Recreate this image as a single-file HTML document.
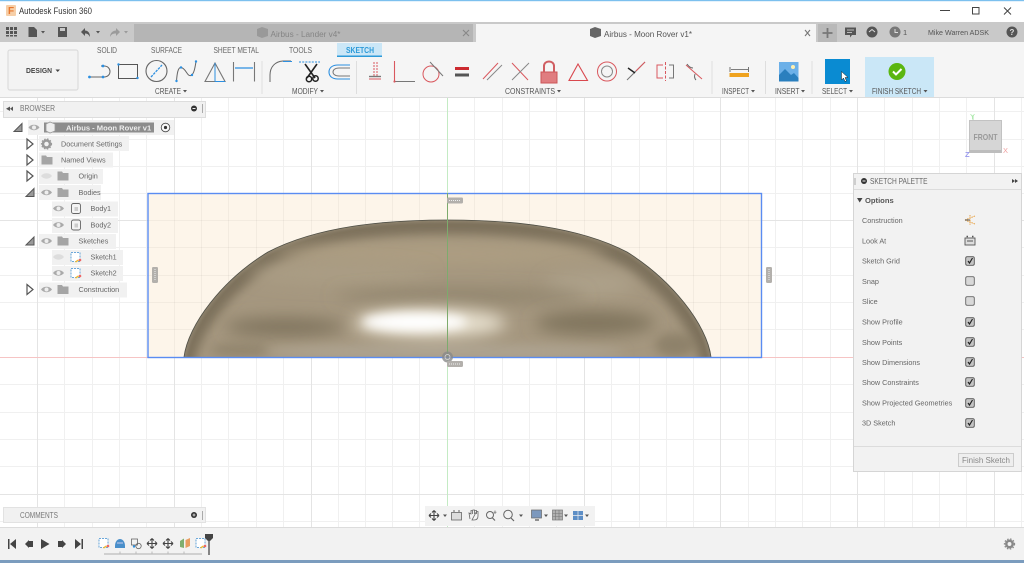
<!DOCTYPE html>
<html><head><meta charset="utf-8"><title>Autodesk Fusion 360</title>
<style>
html,body{margin:0;padding:0;width:1024px;height:563px;overflow:hidden;background:#fff}
svg{display:block}
text{font-family:"Liberation Sans",sans-serif;font-size:7.2px;fill:#555}
.c{text-anchor:middle}
.p{fill:#666;font-size:7.250px}
</style></head><body>
<svg width="1024" height="563" viewBox="0 0 1024 563" xmlns="http://www.w3.org/2000/svg">
<defs>
<clipPath id="dome"><path d="M184 357C188 325 222 280 268 252C318 226 385 220 447 220C510 220 577 226 627 252C672 280 707 325 711 357Z"/></clipPath>
<filter id="b2" filterUnits="userSpaceOnUse" x="130" y="180" width="640" height="220"><feGaussianBlur stdDeviation="1.500"/></filter>
<filter id="b5" filterUnits="userSpaceOnUse" x="130" y="180" width="640" height="220"><feGaussianBlur stdDeviation="5"/></filter>
<filter id="b8" filterUnits="userSpaceOnUse" x="130" y="180" width="640" height="220"><feGaussianBlur stdDeviation="8"/></filter>
<g id="eye"><path d="M-5.5 0C-3 -3.6 3 -3.6 5.5 0C3 3.6 -3 3.6 -5.5 0Z" fill="#aaa"/><circle r="2" fill="#eee"/></g>
<g id="eyeoff"><path d="M-5.5 0C-3 -3.6 3 -3.6 5.5 0C3 3.6 -3 3.6 -5.5 0Z" fill="#ddd"/></g>
<g id="folder"><path d="M-5.5 -4.5H-1L0 -3H5.5V4.5H-5.5Z" fill="#a5a5a5"/></g>
<g id="open"><path d="M-3 -5L3 0L-3 5Z" fill="none" stroke="#555" stroke-width="1.2"/></g>
<g id="down"><path d="M4 -4V4H-4Z" fill="#999" stroke="#555"/></g>
<g id="cb"><rect x="-4.300" y="-4.300" width="8.600" height="8.600" rx="1.500" fill="#d8d8d8" stroke="#666" stroke-width=".9"/></g>
<g id="cbc"><rect x="-4.300" y="-4.300" width="8.600" height="8.600" rx="1.500" fill="#c4c4c4" stroke="#555" stroke-width=".9"/><path d="M-2 0L-.5 2L2.500 -3" fill="none" stroke="#222" stroke-width="1.200"/></g>
<g id="body"><rect x="-4.500" y="-5" width="9" height="10" rx="2" fill="#f4f4f4" stroke="#666" stroke-width=".9"/><rect x="-1.500" y="-1.500" width="3.500" height="4" fill="#ccc"/></g>
<g id="sk"><rect x="-4.500" y="-4.500" width="9" height="9" fill="#fff" stroke="#3f8fd0" stroke-width=".8" stroke-dasharray="2 1"/><circle cx="4.500" cy="3" r="1.300" fill="#e66"/><path d="M0 5L3 3" stroke="#eebb33" stroke-width="1.400"/></g>
<g id="hh"><rect x="-8" y="-3" width="16" height="6" rx="1.200" fill="#b3b0ac"/><path d="M-6 0H6" stroke="#eee" stroke-dasharray="1 1"/></g>
<g id="hv"><rect x="-3" y="-8" width="6" height="16" rx="1.200" fill="#b3b0ac"/><path d="M0 -6V6" stroke="#eee" stroke-dasharray="1 1"/></g>
<g id="move"><path d="M-5 0H5M0 -5V5M-5 0L-3 -2M-5 0L-3 2M5 0L3 -2M5 0L3 2M0 -5L-2 -3M0 -5L2 -3M0 5L-2 3M0 5L2 3" fill="none" stroke="#444" stroke-width="1.100"/></g>
</defs>

<rect width="1024" height="563" fill="#fff"/>

<!-- grid -->
<g stroke="#f0f0f0" stroke-width="1">
<path d="M64.500 98V527M92.500 98V527M119.500 98V527M146.500 98V527M201.500 98V527M228.500 98V527M256.500 98V527M283.500 98V527M338.500 98V527M365.500 98V527M392.500 98V527M419.500 98V527M474.500 98V527M502.500 98V527M529.500 98V527M556.500 98V527M611.500 98V527M639.500 98V527M666.500 98V527M693.500 98V527M748.500 98V527M775.500 98V527M802.500 98V527M830.500 98V527M884.500 98V527M912.500 98V527M939.500 98V527M966.500 98V527M1021.500 98V527"/>
<path d="M0 111.500H1024M0 139.500H1024M0 166.500H1024M0 193.500H1024M0 247.500H1024M0 275.500H1024M0 302.500H1024M0 329.500H1024M0 384.500H1024M0 412.500H1024M0 439.500H1024M0 466.500H1024M0 521.500H1024"/>
</g>
<g stroke="#e4e4e4" stroke-width="1">
<path d="M37.500 98V527M174.500 98V527M311.500 98V527M584.500 98V527M720.500 98V527M857.500 98V527M994.500 98V527"/>
<path d="M0 220.500H1024M0 494.500H1024"/>
</g>
<path d="M0 357.500H148M762 357.500H1024" stroke="#f6c4c4"/>

<!-- sketch profile -->
<rect x="148" y="193.500" width="613.500" height="164" fill="#fdf5ea"/>
<g stroke="#000" stroke-opacity=".04"><path d="M174.500 194V357M201.500 194V357M228.500 194V357M256.500 194V357M283.500 194V357M311.500 194V357M338.500 194V357M365.500 194V357M392.500 194V357M419.500 194V357M474.500 194V357M502.500 194V357M529.500 194V357M556.500 194V357M584.500 194V357M611.500 194V357M639.500 194V357M666.500 194V357M693.500 194V357M720.500 194V357M748.500 194V357"/><path d="M148 220.500H761M148 247.500H761M148 275.500H761M148 302.500H761M148 329.500H761"/></g>

<!-- dome -->
<g clip-path="url(#dome)">
<rect x="180" y="215" width="535" height="145" fill="#a5977f"/>
<path d="M184 362C188 325 222 280 268 252C318 226 385 220 447 220C510 220 577 226 627 252C672 280 707 325 711 362" fill="none" stroke="#7d715b" stroke-width="20" filter="url(#b5)" transform="translate(0 5)"/>
<ellipse cx="440" cy="254" rx="165" ry="10" fill="#ad9e82" filter="url(#b8)"/>
<ellipse cx="590" cy="284" rx="45" ry="12" fill="#ada18a" filter="url(#b8)"/>
<ellipse cx="340" cy="274" rx="90" ry="9" fill="#ab9e85" filter="url(#b8)"/>
<ellipse cx="460" cy="296" rx="125" ry="7" fill="#8f836c" filter="url(#b8)"/>
<ellipse cx="285" cy="327" rx="60" ry="9" fill="#7f735d" filter="url(#b8)"/>
<ellipse cx="595" cy="323" rx="60" ry="12" fill="#80745d" filter="url(#b8)"/>
<ellipse cx="240" cy="350" rx="30" ry="7" fill="#7d725c" filter="url(#b5)" opacity=".45"/>
<ellipse cx="445" cy="352" rx="180" ry="8" fill="#ada390" filter="url(#b5)"/>
<ellipse cx="675" cy="345" rx="20" ry="12" fill="#80745d" filter="url(#b5)" opacity=".6"/>
<ellipse cx="430" cy="323" rx="76" ry="14" fill="#e8e1d0" filter="url(#b8)"/>
<ellipse cx="415" cy="322" rx="52" ry="9" fill="#fff" filter="url(#b5)"/>
<path d="M184 362C188 325 222 280 268 252C318 226 385 220 447 220C510 220 577 226 627 252C672 280 707 325 711 362" fill="none" stroke="#b4a995" stroke-width="3" filter="url(#b2)" opacity=".35"/>
</g>
<path d="M184 357C188 325 222 280 268 252C318 226 385 220 447 220C510 220 577 226 627 252C672 280 707 325 711 357" fill="none" stroke="#4f4f46" stroke-width=".8"/>

<rect x="148" y="193.500" width="613.500" height="164" fill="none" stroke="#5a8cf2" stroke-width="1.400"/>
<path d="M447.500 98V193M447.500 358V527" stroke="#c4ebc4" stroke-width="1"/>
<path d="M447.500 193V357" stroke="#7dab6d" stroke-width="1"/>
<circle cx="447.500" cy="357" r="5.500" fill="#8a8a8a" opacity=".8"/><circle cx="447.500" cy="357" r="2.500" fill="none" stroke="#ddd" stroke-width=".7"/>
<use href="#hh" x="455" y="200.500"/><use href="#hh" x="455" y="364"/><use href="#hv" x="155" y="275"/><use href="#hv" x="769" y="275"/>

<!-- title bar -->
<rect width="1024" height="22" fill="#fff"/>
<rect width="1024" height="1.200" fill="#7cc0ee"/>
<rect x="6" y="5" width="10" height="11" rx="1" fill="#f6cfa8"/><text x="8" y="14" style="font-size:10px;font-weight:bold;fill:#e8772e">F</text>
<text x="19" y="14" textLength="73" lengthAdjust="spacingAndGlyphs" style="font-size:9px;fill:#333">Autodesk Fusion 360</text>
<path d="M940 10.500H950" stroke="#444"/><rect x="972.500" y="7.500" width="6.500" height="6.500" fill="none" stroke="#444"/><path d="M1004 7.500L1011 14.500M1011 7.500L1004 14.500" stroke="#444"/>

<!-- app bar -->
<rect y="22" width="1024" height="20" fill="#c9c9c9"/>
<rect x="134" y="24" width="339" height="18" fill="#b5b5b5"/>
<rect x="476" y="24" width="340" height="18" fill="#f5f5f5"/>
<rect x="818" y="24" width="19" height="18" fill="#b9b9b9"/>
<g fill="#555">
<path d="M6 27h3v3h-3zM10 27h3v3h-3zM14 27h3v3h-3zM6 31h3v3h-3zM10 31h3v3h-3zM14 31h3v3h-3zM6 35h3v1.500h-3zM10 35h3v1.500h-3zM14 35h3v1.500h-3z"/>
<path d="M28.500 27H34L37 30V37H28.500Z"/><path d="M41 31H45L43 33.500Z"/>
<path d="M58 27H67V37H58Z"/><rect x="60" y="28" width="5" height="3" fill="#c9c9c9"/>
<path d="M81 32L85 28V30.500C88 30.500 90 33 90 37C88.500 34 87 33.500 85 33.500V36Z"/><path d="M96 31H100L98 33.500Z"/>
</g>
<g fill="#9b9b9b"><path d="M120 32L116 28V30.500C113 30.500 110 33 110 37C111.500 34 113 33.500 116 33.500V36Z"/><path d="M124 31H128L126 33.500Z"/></g>
<path d="M257 29L262 27L268 29V36L262 38L257 36Z" fill="#999"/>
<text x="270.500" y="37" textLength="70" lengthAdjust="spacingAndGlyphs" style="font-size:8.600px;fill:#858585">Airbus - Lander v4*</text>
<path d="M463 30L469 36M469 30L463 36" stroke="#888" stroke-width="1.100"/>
<path d="M590 29L595 27L601 29V36L595 38L590 36Z" fill="#666"/>
<text x="604" y="37" textLength="88" lengthAdjust="spacingAndGlyphs" style="font-size:8.600px;fill:#555">Airbus - Moon Rover v1*</text>
<path d="M805 30L810 36M810 30L805 36" stroke="#777" stroke-width="1.100"/>
<path d="M827.500 28V38M822.500 33H832.500" stroke="#777" stroke-width="1.800"/>
<path d="M845 27.500H856V35H852L850 37.500V35H845Z" fill="#555"/><path d="M847 30H854M847 32.500H852" stroke="#ddd" stroke-width=".8"/>
<circle cx="872" cy="32" r="5.500" fill="#555"/><path d="M869 32L872 29.500L875 32" stroke="#ddd" fill="none"/>
<circle cx="895" cy="32" r="5.500" fill="#777"/><path d="M895 29V32.500H898" stroke="#ddd" fill="none"/>
<text x="903" y="35" style="font-size:7.500px">1</text>
<text x="928" y="35" textLength="61" lengthAdjust="spacingAndGlyphs" style="fill:#555;font-size:7.600px">Mike Warren ADSK</text>
<circle cx="1012" cy="32" r="5.500" fill="#555"/><text x="1012" y="35" class="c" style="font-size:8px;font-weight:bold;fill:#ddd">?</text>

<!-- toolbar -->
<rect y="42" width="1024" height="55" fill="#f5f5f5"/>
<path d="M0 97.500H1024" stroke="#dcdcdc"/>
<rect x="8" y="50" width="70" height="40" rx="2" fill="#f3f3f3" stroke="#dcdcdc" stroke-width="1.200"/>
<text x="26" y="73" textLength="26" lengthAdjust="spacingAndGlyphs" style="font-size:7.600px;fill:#444;font-weight:bold">DESIGN</text><path d="M55.500 69.500H60L57.700 72Z" fill="#444"/>
<rect x="337" y="43" width="45" height="13" fill="#cbe7f7"/><rect x="337" y="55.500" width="45" height="1.500" fill="#2c9ad8"/>
<g>
<text x="97" y="53" textLength="20" lengthAdjust="spacingAndGlyphs" style="fill:#666;font-size:7.800px">SOLID</text>
<text x="151" y="53" textLength="31" lengthAdjust="spacingAndGlyphs" style="fill:#666;font-size:7.800px">SURFACE</text>
<text x="213.500" y="53" textLength="45.500" lengthAdjust="spacingAndGlyphs" style="fill:#666;font-size:7.800px">SHEET METAL</text>
<text x="289" y="53" textLength="23" lengthAdjust="spacingAndGlyphs" style="fill:#666;font-size:7.800px">TOOLS</text>
</g>
<text x="346" y="53" textLength="28" lengthAdjust="spacingAndGlyphs" style="fill:#2c9ad8;font-weight:bold;font-size:7.800px">SKETCH</text>
<g>
<text x="155" y="94" textLength="26" lengthAdjust="spacingAndGlyphs" style="font-size:7.800px">CREATE</text>
<text x="292" y="94" textLength="26" lengthAdjust="spacingAndGlyphs" style="font-size:7.800px">MODIFY</text>
<text x="505" y="94" textLength="50" lengthAdjust="spacingAndGlyphs" style="font-size:7.800px">CONSTRAINTS</text>
<text x="722" y="94" textLength="27" lengthAdjust="spacingAndGlyphs" style="font-size:7.800px">INSPECT</text>
<text x="775" y="94" textLength="24.500" lengthAdjust="spacingAndGlyphs" style="font-size:7.800px">INSERT</text>
<text x="822" y="94" textLength="25" lengthAdjust="spacingAndGlyphs" style="font-size:7.800px">SELECT</text>
</g>
<g fill="#555"><path d="M183 90H187L185 92.500Z"/><path d="M320 90H324L322 92.500Z"/><path d="M557 90H561L559 92.500Z"/><path d="M751 90H755L753 92.500Z"/><path d="M801 90H805L803 92.500Z"/><path d="M849 90H853L851 92.500Z"/></g>
<path d="M262 61V94M356.500 61V94M712 61V94M765.500 61V94M812 61V94" stroke="#dedede"/>

<!-- create icons -->
<path d="M90 77H104C112 77 112 66 104 66H101" fill="none" stroke="#666" stroke-width="1"/><g fill="#2c8fe0"><circle cx="89.500" cy="77" r="1.400"/><circle cx="103" cy="77" r="1.400"/><circle cx="103" cy="66" r="1.400"/></g>
<rect x="118.500" y="64.500" width="19" height="14" fill="none" stroke="#555"/><g fill="#2c8fe0"><circle cx="118.500" cy="64.500" r="1.200"/><circle cx="137.500" cy="78" r="1.200"/></g>
<circle cx="156.500" cy="71" r="10.500" fill="none" stroke="#666" stroke-width="1.100"/><path d="M151 77L162 65" stroke="#2c8fe0" stroke-width="1.300" stroke-dasharray="2.500 1"/>
<path d="M176.500 81C177 74 178 67 181 67.500C186 68 187 77 191 75.500C194 74 195 68 196 61.500" fill="none" stroke="#666"/><g fill="#2c8fe0"><circle cx="176.500" cy="81" r="1.200"/><circle cx="181" cy="67.500" r="1.200"/><circle cx="192" cy="75" r="1.200"/><circle cx="196" cy="61.500" r="1.200"/></g>
<path d="M205 81.500L215 63L225 81.500Z" fill="none" stroke="#777" stroke-width="1.100"/><path d="M215 63V81.500" stroke="#2c8fe0"/><path d="M215 81.500H225" stroke="#2c8fe0"/>
<path d="M233.500 62V81.500M254.500 62V81.500" stroke="#777" stroke-width="1.100"/><path d="M235 68H253" stroke="#2c8fe0" stroke-width="1.200"/>
<!-- modify -->
<path d="M270 82V75C270 67 275 61.500 283 61H291" fill="none" stroke="#666" stroke-width="1"/><path d="M283 61.500H292" stroke="#2c8fe0" stroke-width="1"/>
<path d="M299 62H320" stroke="#2c8fe0" stroke-dasharray="2 1.200"/>
<path d="M305 64L315 78M317 64L307 78" stroke="#222" stroke-width="1.600"/><circle cx="309" cy="79" r="2.700" fill="none" stroke="#222" stroke-width="1.500"/><circle cx="315.500" cy="78.500" r="2.700" fill="none" stroke="#222" stroke-width="1.500"/>
<path d="M350 65H338C332 65 329 68 329 72C329 76 332 79 338 79H350" fill="none" stroke="#2c8fe0" stroke-width="1.100"/><path d="M350 68H339C335 68 333 70 333 72C333 74 335 76 339 76H350" fill="none" stroke="#777"/>
<!-- constraints -->
<path d="M374 62V76M377 62V76" stroke="#d9585e" stroke-dasharray="2 1"/><path d="M369 76.500H381" stroke="#777" stroke-width="1.400"/><path d="M369 79H381" stroke="#d9585e" stroke-width="1"/>
<path d="M394.500 61V81.500" stroke="#d9585e" stroke-width="1.100"/><path d="M394.500 81.500H415" stroke="#777" stroke-width="1"/><circle cx="394.500" cy="81.500" r="1.100" fill="#d9585e"/>
<circle cx="431" cy="74" r="8" fill="none" stroke="#d9585e" stroke-width="1"/><path d="M430 62L443 76" stroke="#777"/>
<rect x="455" y="67" width="14" height="3" fill="#cc2a30"/><rect x="455" y="73.500" width="14" height="3" fill="#555"/>
<path d="M483 79L498 63" stroke="#d9585e"/><path d="M487 80L502 65" stroke="#888"/>
<path d="M512 63L528 80" stroke="#d9585e"/><path d="M512 80L529 63" stroke="#888"/>
<rect x="541" y="72" width="16" height="11" fill="#e07d80" stroke="#cc5558"/><path d="M544 72V66C544 60 554 60 554 66V72" fill="none" stroke="#d05e62" stroke-width="2"/>
<path d="M578 64L587.500 80.500H569Z" fill="none" stroke="#d9484e" stroke-width="1.100"/>
<circle cx="607" cy="71.500" r="9.500" fill="none" stroke="#d9585e"/><circle cx="607" cy="71.500" r="5.500" fill="none" stroke="#888"/>
<path d="M627 80L645 62" stroke="#777"/><path d="M636 71L645 62" stroke="#d9585e"/><path d="M628 68L635 73" stroke="#222" stroke-width="1.400"/>
<path d="M663 65H657V78H663" fill="none" stroke="#d9585e"/><path d="M669 65H673.500V78H669" fill="none" stroke="#777"/><path d="M665.500 62V81" stroke="#d9585e" stroke-dasharray="3 1.500"/>
<path d="M686 65L702 79" stroke="#d9585e"/><path d="M695 74C694 77 695 79 696 80M693 68C691 68 689 67 687 64" fill="none" stroke="#666"/>
<!-- inspect -->
<path d="M730 67V72M748.500 67V72M731 69.500H748" stroke="#555" stroke-width=".8"/><rect x="729.500" y="73" width="19.500" height="4" fill="#efa31f"/>
<!-- insert -->
<rect x="779" y="62" width="19.500" height="19.500" fill="#6cb0e8"/><circle cx="793" cy="67" r="2" fill="#fff0b0"/><path d="M779 75L785 69L791 75L794 73L798.500 78V81.500H779Z" fill="#2a7fbe"/>
<!-- select -->
<rect x="825" y="59" width="25" height="25" fill="#0a8bd2"/><path d="M841.500 71.500V80L843.500 78L845 81.500L846.500 81L845 77.500H848Z" fill="#fff" stroke="#222" stroke-width=".5"/>
<!-- finish -->
<rect x="865" y="57" width="69" height="40" fill="#cae7f7"/>
<circle cx="897" cy="71.500" r="8.500" fill="#5bb610"/><path d="M893 71.500L896 74.500L901.500 69" fill="none" stroke="#fff" stroke-width="2"/>
<text x="872" y="94" textLength="49" lengthAdjust="spacingAndGlyphs" style="font-size:7.800px">FINISH SKETCH</text><path d="M923.500 90H927.500L925.500 92.500Z" fill="#555"/>

<!-- browser -->
<rect x="3.500" y="101.500" width="202" height="16" fill="#f1f1f1" stroke="#ddd"/>
<path d="M10 106.500L6 108.800L10 111ZM13 106.500L10 108.800L13 111Z" fill="#555"/>
<text x="20" y="111" textLength="35" lengthAdjust="spacingAndGlyphs" style="fill:#777;font-size:7.800px">BROWSER</text>
<circle cx="194" cy="108.500" r="3" fill="#333"/><path d="M192.500 108.500H195.500" stroke="#eee"/>
<path d="M202.500 104V113" stroke="#aaa"/>

<rect x="28" y="120" width="146" height="15" fill="#f1f1f1"/>
<rect x="44" y="122.500" width="110" height="10" fill="#8d8d8d"/>
<use href="#down" x="18" y="127.500"/>
<use href="#eye" x="34" y="127.500"/>
<path d="M46 124L50 122L55 124V131L50 133L46 131Z" fill="#eee" stroke="#999" stroke-width=".8"/>
<text x="66" y="130.500" style="font-weight:bold;fill:#eee;font-size:7.600px">Airbus - Moon Rover v1</text>
<circle cx="165.500" cy="127.500" r="4.300" fill="#f8f8f8" stroke="#444" stroke-width=".8"/><circle cx="165.500" cy="127.500" r="1.600" fill="#333"/>

<!-- rows -->
<g fill="#f1f1f1">
<rect x="39" y="136" width="90" height="15"/><rect x="39" y="152.500" width="74" height="15"/><rect x="39" y="169" width="64" height="15"/><rect x="39" y="185" width="62" height="15"/>
<rect x="52" y="201.500" width="66" height="15"/><rect x="52" y="218" width="66" height="15"/><rect x="39" y="234" width="77" height="15"/>
<rect x="52" y="250" width="71" height="15"/><rect x="52" y="266" width="71" height="15"/><rect x="39" y="282.500" width="88" height="15"/>
</g>
<use href="#open" x="30" y="144"/><use href="#open" x="30" y="160"/><use href="#open" x="30" y="176"/><use href="#down" x="30" y="192.500"/><use href="#down" x="30" y="241"/><use href="#open" x="30" y="289.500"/>
<circle cx="46.500" cy="144" r="3.500" fill="none" stroke="#999" stroke-width="2.500"/><circle cx="46.500" cy="144" r="5" fill="none" stroke="#999" stroke-width="1.200" stroke-dasharray="1.500 1.500"/>
<use href="#folder" x="47" y="160"/>
<use href="#eyeoff" x="46.500" y="176"/><use href="#folder" x="63" y="176"/>
<use href="#eye" x="46.500" y="192.500"/><use href="#folder" x="63" y="192.500"/>
<use href="#eye" x="58.500" y="208.500"/><use href="#body" x="76" y="208.500"/>
<use href="#eye" x="58.500" y="225"/><use href="#body" x="76" y="225"/>
<use href="#eye" x="46.500" y="241"/><use href="#folder" x="63" y="241"/>
<use href="#eyeoff" x="58.500" y="257"/><use href="#sk" x="75.500" y="257"/>
<use href="#eye" x="58.500" y="273"/><use href="#sk" x="75.500" y="273"/>
<use href="#eye" x="46.500" y="289.500"/><use href="#folder" x="63" y="289.500"/>
<g>
<text x="61" y="146.500" class="p">Document Settings</text><text x="61" y="162.500" class="p">Named Views</text><text x="78.500" y="178.500" class="p">Origin</text><text x="78.500" y="195" class="p">Bodies</text>
<text x="90.500" y="211" class="p">Body1</text><text x="90.500" y="227.500" class="p">Body2</text><text x="78.500" y="243.500" class="p">Sketches</text>
<text x="90.500" y="259.500" class="p">Sketch1</text><text x="90.500" y="275.500" class="p">Sketch2</text><text x="78.500" y="292" class="p">Construction</text>
</g>

<!-- view cube -->
<path d="M973 115V121" stroke="#a8e6a8"/>
<rect x="969.500" y="120.500" width="32" height="32" fill="#d6d6d6" stroke="#c2c2c2"/>
<rect x="969.500" y="150" width="32" height="3" fill="#bdbdbd"/>
<text x="985.500" y="140" class="c" style="font-size:8.500px;font-weight:bold;fill:#9a9a9a" textLength="24" lengthAdjust="spacingAndGlyphs">FRONT</text>
<text x="970" y="119" style="font-size:7.500px;fill:#a5e8a5">Y</text>
<text x="1003" y="153" style="font-size:7.500px;fill:#f0a0a0">X</text>
<text x="965" y="157" style="font-size:7.500px;fill:#9999ee;font-weight:bold">Z</text>

<!-- palette -->
<rect x="853.500" y="173.500" width="168" height="298" fill="#f2f2f2" stroke="#d5d5d5"/>
<path d="M854 189.500H1021M854 446.500H1021" stroke="#dcdcdc"/>
<path d="M855 178V185" stroke="#aaa"/>
<circle cx="864" cy="181" r="3" fill="#333"/><path d="M862.500 181H865.500" stroke="#eee"/>
<text x="870" y="184" textLength="57.500" lengthAdjust="spacingAndGlyphs" style="fill:#666;font-size:7.800px">SKETCH PALETTE</text>
<path d="M1012 179L1015 181L1012 183ZM1015 179L1018 181L1015 183Z" fill="#444"/>
<path d="M857 198H862.500L859.700 202.500Z" fill="#444"/>
<text x="865" y="203" style="font-weight:bold;fill:#555;font-size:7.600px">Options</text>
<g>
<text x="862" y="223" class="p">Construction</text><text x="862" y="243.500" class="p">Look At</text><text x="862" y="263.500" class="p">Sketch Grid</text><text x="862" y="284" class="p">Snap</text><text x="862" y="304" class="p">Slice</text><text x="862" y="324.500" class="p">Show Profile</text><text x="862" y="345" class="p">Show Points</text><text x="862" y="365" class="p">Show Dimensions</text><text x="862" y="385" class="p">Show Constraints</text><text x="862" y="405.500" class="p">Show Projected Geometries</text><text x="862" y="425.500" class="p">3D Sketch</text>
</g>
<path d="M965 220L975 216M965 220L975 224M970 215V225" fill="none" stroke="#e8a040" stroke-dasharray="1.500 .8"/><path d="M965 220H970" stroke="#555"/>
<rect x="965" y="238" width="10" height="7" fill="#ddd" stroke="#555" stroke-width=".9"/><path d="M966.500 236.500H968M972 236.500H973.500" stroke="#555" stroke-width="1.500"/><path d="M967 241H973" stroke="#555"/>
<use href="#cbc" x="970" y="261"/><use href="#cb" x="970" y="281"/><use href="#cb" x="970" y="301"/><use href="#cbc" x="970" y="322"/><use href="#cbc" x="970" y="342"/><use href="#cbc" x="970" y="362"/><use href="#cbc" x="970" y="382"/><use href="#cbc" x="970" y="403"/><use href="#cbc" x="970" y="423"/>
<rect x="958.500" y="453.500" width="55" height="13" fill="#eee" stroke="#ccc"/>
<text x="986" y="463" class="c" style="font-size:8px;fill:#888">Finish Sketch</text>

<!-- comments -->
<rect x="3.500" y="507.500" width="202" height="15" fill="#f1f1f1" stroke="#e2e2e2"/>
<text x="20" y="518" textLength="38" lengthAdjust="spacingAndGlyphs" style="fill:#777;font-size:7.800px">COMMENTS</text>
<circle cx="194" cy="515" r="3" fill="#333"/><path d="M192.500 515H195.500M194 513.500V516.500" stroke="#eee" stroke-width=".8"/>
<path d="M202.500 511V520" stroke="#aaa"/>

<!-- nav bar -->
<rect x="425" y="506" width="170" height="20" fill="#f2f2f2"/>
<use href="#move" x="434" y="515.500"/><path d="M443 514.500H447L445 517Z" fill="#555"/>
<rect x="451.500" y="512.500" width="10" height="7.500" fill="#ddd" stroke="#666" stroke-width=".8"/><path d="M453 511H455M458 511H460" stroke="#666"/>
<path d="M470 519L469 513L471 514V510.500H472.500V514M472.500 510H474.500V514M474.500 510.500H476.500V514M476.500 511.500H478V516C478 519 476 520 474 520H472Z" fill="#f4f4f4" stroke="#666" stroke-width=".8"/>
<circle cx="490" cy="515" r="3.500" fill="none" stroke="#666"/><path d="M492.500 518L495 520.500" stroke="#666" stroke-width="1.200"/><path d="M495 510.500V514M493.500 512.200H496.500" stroke="#666" stroke-width=".7"/>
<circle cx="508" cy="514.500" r="4.300" fill="none" stroke="#666"/><path d="M511 518L514 521" stroke="#666" stroke-width="1.200"/><path d="M519 514.500H523L521 517Z" fill="#555"/>
<rect x="531.500" y="510" width="10" height="8" fill="#7c98bd" stroke="#666" stroke-width=".7"/><path d="M535 520H539" stroke="#666" stroke-width="1.400"/><path d="M544 514.500H548L546 517Z" fill="#555"/>
<rect x="552.500" y="510" width="10" height="10" fill="#b0b0b0" stroke="#777" stroke-width=".7"/><path d="M555.500 510V520M559 510V520M552.500 513.500H562.500M552.500 516.500H562.500" stroke="#777" stroke-width=".6"/><path d="M564 514.500H568L566 517Z" fill="#555"/>
<rect x="573" y="511" width="10" height="9" fill="#5d8ec6"/><path d="M578 511V520M573 515.500H583" stroke="#eee" stroke-width=".7"/><path d="M585 514.500H589L587 517Z" fill="#555"/>

<!-- timeline -->
<rect y="527" width="1024" height="33" fill="#f2f2f2"/>
<path d="M0 527.500H1024" stroke="#dcdcdc"/>
<rect y="560" width="1024" height="3" fill="#7b9cbe"/>
<g fill="#444">
<path d="M8 539H9.500V549H8ZM16 539V549L10 544Z"/>
<path d="M25 544L29 540V548ZM29 541H33V547H29Z"/>
<path d="M41 539L49.500 544L41 549Z"/>
<path d="M66 544L62 540V548ZM62 541H58V547H62Z"/>
<path d="M75 539V549L81 544ZM81.500 539H83V549H81.500Z"/>
</g>
<use href="#sk" x="103.500" y="543"/>
<path d="M115 546C115 541 118 539 120 539C122 539 125 541 125 546V548H115Z" fill="#4a8fca"/><path d="M117 543H123" stroke="#cce" stroke-width="1"/>
<rect x="131.500" y="539" width="6" height="6" fill="none" stroke="#666" stroke-width=".8"/><circle cx="138.500" cy="546" r="2.700" fill="none" stroke="#666" stroke-width=".8"/><circle cx="134" cy="546.500" r="1.200" fill="#2c8fe0"/>
<use href="#move" x="152" y="543.500"/><use href="#move" x="168" y="543.500"/>
<path d="M180 547V541L184 538.500V548Z" fill="#7fae6f"/><path d="M185.500 548V540L190 538V546Z" fill="#e89d60"/>
<use href="#sk" x="200.500" y="543"/>
<path d="M104 554H202" stroke="#bbb" stroke-width="1.200"/>
<path d="M120 551.500V554M136 551.500V554M152 551.500V554M168 551.500V554M184 551.500V554" stroke="#bbb"/>
<path d="M205 534H213V538L210 541H208L205 538Z" fill="#444"/><path d="M209 540V555" stroke="#555" stroke-width="1.400"/>
<circle cx="1009.500" cy="544" r="3.200" fill="none" stroke="#888" stroke-width="2.500"/><circle cx="1009.500" cy="544" r="5" fill="none" stroke="#888" stroke-width="1.300" stroke-dasharray="1.500 1.500"/>
</svg>
</body></html>
